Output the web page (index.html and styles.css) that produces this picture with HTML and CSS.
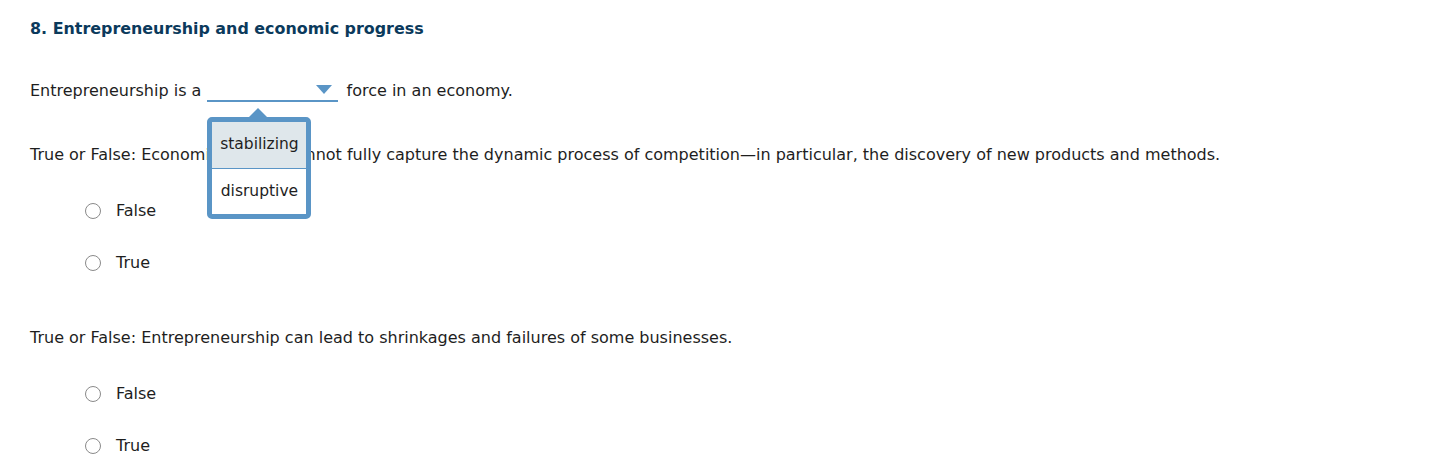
FILE: index.html
```html
<!DOCTYPE html>
<html>
<head>
<meta charset="utf-8">
<link rel="stylesheet" href="styles.css">
</head>
<body>
<div class="page">
  <h2 class="title">8. Entrepreneurship and economic progress</h2>
  <p class="q q1">Entrepreneurship is a <span class="select"><span class="blank"></span><span class="arrow"></span>
    <span class="menu">
      <span class="opt active">stabilizing</span>
      <span class="opt">disruptive</span>
    </span>
  </span> force in an economy.</p>

  <p class="q q2">True or False: Economic models cannot fully capture the dynamic process of competition—in particular, the discovery of new products and methods.</p>
  <div class="choices">
    <label class="choice"><span class="radio"></span>False</label>
    <label class="choice"><span class="radio"></span>True</label>
  </div>

  <p class="q q3">True or False: Entrepreneurship can lead to shrinkages and failures of some businesses.</p>
  <div class="choices">
    <label class="choice"><span class="radio"></span>False</label>
    <label class="choice"><span class="radio"></span>True</label>
  </div>
</div>
</body>
</html>
```

FILE: styles.css
```css
html, body {
  margin: 0;
  padding: 0;
  background: #ffffff;
}
.page {
  padding: 17px 30px 0 30px;
  font-family: "DejaVu Sans", Verdana, sans-serif;
  font-size: 16px;
  color: #1e1e1e;
}
.title {
  margin: 0;
  font-size: 15.9px;
  line-height: 24px;
  font-weight: bold;
  color: #0b3a5c;
}
.q {
  margin: 0;
  line-height: 22px;
}
.q1 {
  margin-top: 39px;
}
.q2 {
  margin-top: 42px;
}
.q3 {
  margin-top: 53px;
}
.select {
  position: relative;
  display: inline-block;
  width: 131px;
  vertical-align: top;
  margin: 0 3px 0 1px;
  border-bottom: 2px solid #5a95c6;
  box-sizing: border-box;
  height: 22px;
}
.arrow {
  position: absolute;
  right: 6px;
  top: 5px;
  width: 0;
  height: 0;
  border-left: 8px solid transparent;
  border-right: 8px solid transparent;
  border-top: 9px solid #5a95c6;
}
.menu {
  position: absolute;
  left: 0;
  top: 37px;
  width: 104px;
  box-sizing: border-box;
  border: 5px solid #5a95c6;
  border-radius: 5px;
  background: #ffffff;
  display: flex;
  flex-direction: column;
  font-size: 15.5px;
}
.menu::before {
  content: "";
  position: absolute;
  left: 37px;
  top: -14px;
  width: 0;
  height: 0;
  border-left: 9px solid transparent;
  border-right: 9px solid transparent;
  border-bottom: 9px solid #5a95c6;
}
.opt {
  display: block;
  height: 45px;
  line-height: 45px;
  text-align: center;
  color: #1e1e1e;
}
.opt.active {
  background: #dfe7eb;
  border-bottom: 1px solid #5a95c6;
  height: 46px;
  line-height: 44px;
}
.choices {
  display: flex;
  flex-direction: column;
  gap: 30px;
  padding-left: 55px;
  margin-top: 34px;
}
.choice {
  display: flex;
  align-items: center;
  gap: 15px;
  height: 22px;
  line-height: 22px;
}
.radio {
  width: 16px;
  height: 16px;
  box-sizing: border-box;
  border: 1px solid #8a8a8a;
  border-radius: 50%;
  background: #fff;
}
```
